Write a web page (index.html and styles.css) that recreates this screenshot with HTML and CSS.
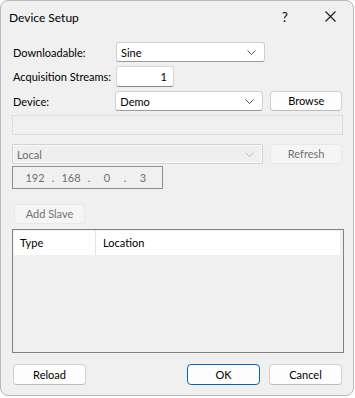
FILE: index.html
```html
<!DOCTYPE html>
<html>
<head>
<meta charset="utf-8">
<link rel="stylesheet" href="styles.css">
</head>
<body>
<div class="window">
  <div class="titlebar">
    <span class="title">Device Setup</span>
    <span class="help">?</span>
    <span class="close">
      <svg width="11" height="11" viewBox="0 0 11 11"><path d="M0.5 0.5L10.5 10.5M10.5 0.5L0.5 10.5" stroke="#1a1a1a" stroke-width="1.1" fill="none"/></svg>
    </span>
  </div>
  <div class="content">
    <div class="row r1">
      <label class="lbl">Downloadable:</label>
      <div class="select"><span>Sine</span><svg class="chev" width="9" height="5" viewBox="0 0 9 5"><path d="M0.5 0.5L4.5 4.5L8.5 0.5" stroke="#555" fill="none"/></svg></div>
    </div>
    <div class="row r2">
      <label class="lbl">Acquisition Streams:</label>
      <div class="num">1</div>
    </div>
    <div class="row r3">
      <label class="lbl">Device:</label>
      <div class="select"><span>Demo</span><svg class="chev" width="9" height="5" viewBox="0 0 9 5"><path d="M0.5 0.5L4.5 4.5L8.5 0.5" stroke="#555" fill="none"/></svg></div>
      <div class="btn browse">Browse</div>
    </div>
    <div class="textbox-dis"></div>
    <div class="row r4">
      <div class="select dis wide"><span>Local</span><svg class="chev" width="9" height="5" viewBox="0 0 9 5"><path d="M0.5 0.5L4.5 4.5L8.5 0.5" stroke="#bbb" fill="none"/></svg></div>
      <div class="btn dis browse">Refresh</div>
    </div>
    <div class="ip">
      <span class="oct">192</span><span class="dot">.</span><span class="oct">168</span><span class="dot">.</span><span class="oct">0</span><span class="dot">.</span><span class="oct">3</span>
    </div>
    <div class="btn dis addslave">Add Slave</div>
    <div class="list">
      <div class="lhead">
        <div class="col c1">Type</div>
        <div class="col c2">Location</div>
      </div>
    </div>
    <div class="footer">
      <div class="btn fbtn">Reload</div>
      <div class="spacer"></div>
      <div class="btn fbtn ok">OK</div>
      <div class="btn fbtn">Cancel</div>
    </div>
  </div>
</div>
</body>
</html>
```
FILE: styles.css
```css
html, body {
  margin: 0;
  padding: 0;
  background: #ffffff;
}
body {
  font-family: "Lato", "Liberation Sans", sans-serif;
  font-size: 11px;
  color: #000;
}
.window {
  box-sizing: border-box;
  width: 354px;
  height: 396px;
  border: 1px solid #b9b9b9;
  border-radius: 8px;
  background: #f0f0f0;
  overflow: hidden;
}
.titlebar {
  height: 32px;
  display: flex;
  align-items: center;
  padding-left: 8px;
}
.title {
  font-size: 12px;
  flex: 1;
}
.help {
  font-size: 13px;
  width: 14px;
  margin-right: 29px;
}
.close {
  display: flex;
  margin-right: 17px;
  margin-top: -1px;
}
.content {
  padding: 9px 11px 0 11px;
}
.row {
  display: flex;
  align-items: center;
}
.lbl {
  width: 103px;
  padding-left: 1px;
  white-space: nowrap;
}
.select {
  box-sizing: border-box;
  width: 149px;
  height: 20px;
  background: #fff;
  border: 1px solid #cfcfcf;
  border-bottom-color: #9a9a9a;
  border-radius: 3px;
  display: flex;
  align-items: center;
  padding: 0 0 0 4px;
}
.select span { flex: 1; }
.chev { margin-right: 8px; }
.select.wide { width: 252px; }
.select.dis {
  background: #efefef;
  border: 1px solid #d2d2d2;
  box-shadow: inset 0 0 0 1px #fafafa;
  color: #6e6e6e;
  border-radius: 1px;
}
.r1 { height: 20px; }
.r2 { height: 21px; margin-top: 4px; }
.r3 { height: 20px; margin-top: 4px; }
.r4 { height: 20px; margin-top: 9px; }
.num {
  box-sizing: border-box;
  width: 58px;
  height: 21px;
  background: #fff;
  border: 1px solid #d6d6d6;
  border-bottom-color: #8a8a8a;
  border-radius: 3px;
  text-align: right;
  padding-right: 6px;
  line-height: 19px;
}
.btn {
  box-sizing: border-box;
  height: 20px;
  background: #fdfdfd;
  border: 1px solid #d0d0d0;
  border-bottom-color: #bcbcbc;
  border-radius: 4px;
  text-align: center;
  line-height: 18px;
}
.btn.browse {
  width: 72px;
  margin-left: 7px;
}
.btn.dis {
  background: #f5f5f5;
  border-color: #e8e8e8;
  color: #717171;
}
.textbox-dis {
  box-sizing: border-box;
  height: 20px;
  margin-top: 4px;
  width: 331px;
  border: 1px solid #dcdcdc;
  background: #f0f0f0;
}
.ip {
  box-sizing: border-box;
  width: 151px;
  height: 23px;
  margin-top: 2px;
  border: 1px solid #8e8e8e;
  background: #f0f0f0;
  display: flex;
  align-items: center;
  color: #6e6e6e;
  padding-left: 12px;
}
.oct { width: 20px; text-align: center; }
.dot { width: 16px; text-align: center; }
.addslave {
  width: 71px;
  margin-left: 2px;
  margin-top: 15px;
}
.list {
  box-sizing: border-box;
  margin-top: 5px;
  width: 332px;
  height: 124px;
  border: 1px solid #828282;
  background: #f0f0f0;
  padding: 1px 1px 0 1px;
}
.lhead {
  display: flex;
  height: 24px;
  background: #fff;
  margin-right: 2px;
}
.col {
  line-height: 24px;
  padding-left: 6px;
}
.c1 {
  width: 82px;
  box-sizing: border-box;
  border-right: 1px solid #e5e5e5;
}
.c2 { padding-left: 7px; }
.footer {
  display: flex;
  margin-top: 11px;
  padding-left: 1px;
}
.fbtn {
  width: 73px;
  height: 21px;
  line-height: 19px;
}
.spacer { flex: 1; }
.ok {
  border: 1px solid #0067c0;
  margin-right: 9px;
}
```
